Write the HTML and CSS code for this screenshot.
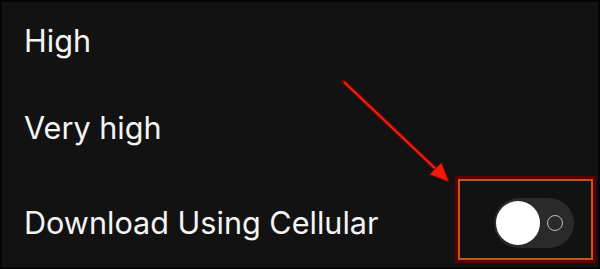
FILE: index.html
```html
<!DOCTYPE html>
<html lang="en">
<head>
  <meta charset="UTF-8" />
  <title>Download settings</title>
  <link rel="stylesheet" href="styles.css">
</head>
<body>
  <div class="screen">
    <div class="row row-high">
      <span class="label">High</span>
    </div>
    <div class="row row-very">
      <span class="label">Very high</span>
    </div>
    <div class="row row-cell">
      <span class="label">Download Using Cellular</span>
      <!-- highlighted toggle -->
      <div class="mark-box">
        <div class="track">
          <span class="knob"></span>
          <span class="ring"></span>
        </div>
      </div>
    </div>

    <!-- annotation arrow -->
    <svg class="arrow" width="600" height="269" viewBox="0 0 600 269">
      <line x1="344" y1="82" x2="440" y2="173" stroke="#6e0000" stroke-width="4.5" stroke-linecap="square" />
      <line x1="344" y1="82" x2="440" y2="173" stroke="#e0260f" stroke-width="2.2" />
      <polygon points="449,182 441.5,162.5 429.5,174.5" fill="#ef1a0a" stroke="#7a0000" stroke-width="1" />
    </svg>
  </div>
</body>
</html>
```

FILE: styles.css
```css
* {
  box-sizing: border-box;
}

body {
  margin: 0;
  background: #000;
  font-family: Inter, Lato, sans-serif;
}

.screen {
  position: relative;
  width: 600px;
  height: 269px;
  border: 2px solid #050505;
  background: #121212;
  color: #f4f4f4;
  overflow: hidden;
}

.row {
  display: flex;
  align-items: center;
  justify-content: space-between;
  padding-left: 22px;
  padding-right: 2px;
}

.row-high {
  height: 78px;
}

.row-very {
  height: 96px;
}

.row-cell {
  height: 91px;
  align-items: flex-start;
}

.row-cell .label {
  margin-top: 32px;
}

.label {
  font-size: 30.6px;
  line-height: 30px;
}

.mark-box {
  width: 141px;
  height: 87px;
  border: 3px solid #5c0000;
  box-shadow: inset 0 0 0 2px #c2561c;
  padding: 19px 0 0 36px;
}

.track {
  display: flex;
  align-items: center;
  width: 80px;
  height: 50px;
  border-radius: 25px;
  background: #2a2a2a;
  padding-left: 2px;
}

.knob {
  width: 44px;
  height: 44px;
  border-radius: 50%;
  background: #fff;
}

.ring {
  width: 16px;
  height: 16px;
  margin-left: 7px;
  border-radius: 50%;
  border: 1.5px solid #bdbdbd;
}

.arrow {
  position: absolute;
  left: -2px;
  top: -2px;
  pointer-events: none;
}
```
